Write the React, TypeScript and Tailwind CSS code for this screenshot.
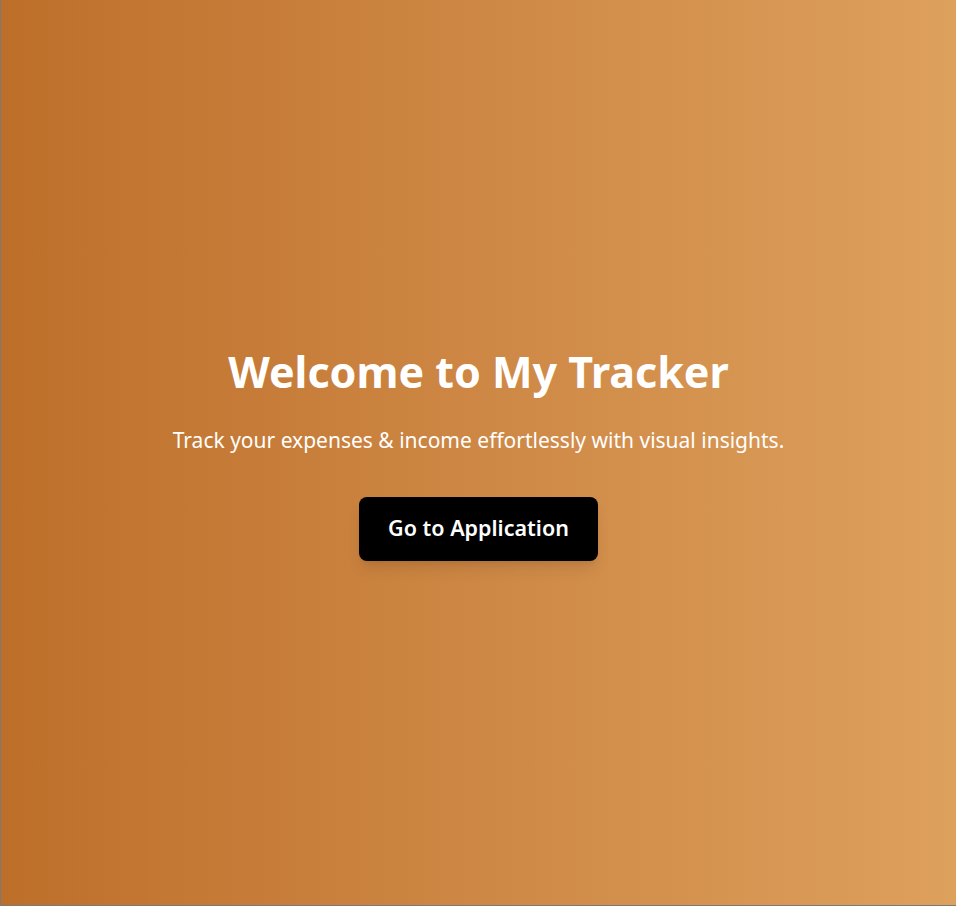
export default function App() {
  return (
    <div
      className="h-[906px] w-full flex flex-col items-center justify-center bg-gradient-to-r from-[#bd6f29] to-[#dea05d] border-l border-b border-[#7a7a7a] text-white text-center"
      style={{ fontFamily: '"Noto Sans", "Open Sans", sans-serif' }}
    >
      <h1 className="text-[43px] font-bold leading-[54px] mb-[26px]">Welcome to My Tracker</h1>
      <p className="text-[21px] leading-[30px] mb-[42px]">Track your expenses &amp; income effortlessly with visual insights.</p>
      <button className="bg-black text-white text-[21.5px] font-semibold px-[29px] h-[64px] rounded-lg shadow-lg">
        Go to Application
      </button>
    </div>
  );
}
